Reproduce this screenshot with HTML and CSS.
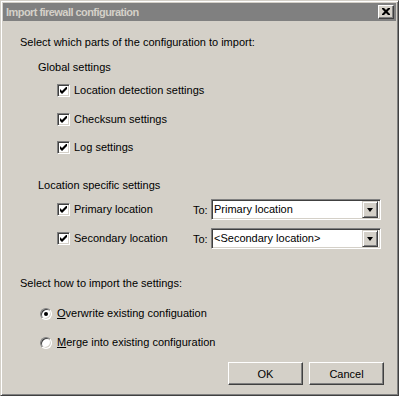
FILE: index.html
```html
<!DOCTYPE html>
<html lang="en">

<head>
    <meta charset="UTF-8">
    <meta name="viewport" content="width=device-width, initial-scale=1.0">
    <title>Import firewall configuration</title>
    <link rel="stylesheet" href="styles.css">
</head>

<body>
    <div class="window">
        <div class="titlebar">
            <span class="title">Import firewall configuration</span>
            <span class="close-btn">
                <svg width="8" height="7" viewBox="0 0 8 7">
                    <path d="M0 0h2l2 2 2-2h2v1L5.5 3.5 8 6v1H6L4 5 2 7H0V6l2.5-2.5L0 1z" fill="#000" />
                </svg>
            </span>
        </div>

        <div class="content">
            <div class="intro">Select which parts of the configuration to import:</div>

            <div class="group-label global-label">Global settings</div>
            <div class="check-list">
                <div class="check-row"><span class="checkbox checked"></span>Location detection settings</div>
                <div class="check-row"><span class="checkbox checked"></span>Checksum settings</div>
                <div class="check-row"><span class="checkbox checked"></span>Log settings</div>
            </div>

            <div class="group-label location-label">Location specific settings</div>
            <div class="location-list">
                <div class="location-row">
                    <div class="check-row loc-check"><span class="checkbox checked"></span>Primary location</div>
                    <span class="to-label">To:</span>
                    <div class="combo">
                        <span class="combo-text">Primary location</span>
                        <span class="combo-btn"><span class="arrow"></span></span>
                    </div>
                </div>
                <div class="location-row">
                    <div class="check-row loc-check"><span class="checkbox checked"></span>Secondary location</div>
                    <span class="to-label">To:</span>
                    <div class="combo">
                        <span class="combo-text">&lt;Secondary location&gt;</span>
                        <span class="combo-btn"><span class="arrow"></span></span>
                    </div>
                </div>
            </div>

            <div class="intro how-label">Select how to import the settings:</div>
            <div class="radio-list">
                <div class="radio-row"><span class="radio selected"></span><span><u>O</u>verwrite existing configuation</span></div>
                <div class="radio-row"><span class="radio"></span><span><u>M</u>erge into existing configuration</span></div>
            </div>

            <div class="buttons">
                <span class="btn">OK</span>
                <span class="btn">Cancel</span>
            </div>
        </div>
    </div>
</body>

</html>
```

FILE: styles.css
```css
body {
    margin: 0;
    font-family: "Liberation Sans", Arial, sans-serif;
    font-size: 11px;
    color: #000;
    background: #d4d0c8;
}

.window {
    width: 399px;
    height: 396px;
    box-sizing: border-box;
    padding: 2px;
    background: #d4d0c8;
    border: 1px solid;
    border-color: #d4d0c8 #404040 #404040 #d4d0c8;
    box-shadow: inset 1px 1px 0 #fff, inset -1px -1px 0 #808080;
    display: flex;
    flex-direction: column;
}

.titlebar {
    height: 18px;
    background: #808080;
    display: flex;
    align-items: center;
    justify-content: space-between;
    padding: 0 2px 0 3px;
}

.title {
    color: #d4d0c8;
    font-weight: bold;
    font-size: 11px;
    letter-spacing: -0.55px;
}

.close-btn {
    width: 16px;
    height: 14px;
    box-sizing: border-box;
    background: #d4d0c8;
    border: 1px solid;
    border-color: #fff #404040 #404040 #fff;
    box-shadow: inset -1px -1px 0 #808080;
    display: flex;
    align-items: center;
    justify-content: center;
    padding-bottom: 1px;
}

.content {
    display: flex;
    flex-direction: column;
    padding: 15px 0 0 17px;
}

.intro,
.group-label,
.check-row,
.radio-row {
    line-height: 13px;
    height: 13px;
    white-space: nowrap;
}

.global-label {
    margin: 12px 0 0 18px;
}

.check-list {
    display: flex;
    flex-direction: column;
    gap: 15.5px;
    margin: 10px 0 0 37px;
}

.check-row {
    display: flex;
    align-items: center;
    gap: 4px;
}

.checkbox {
    width: 13px;
    height: 13px;
    box-sizing: border-box;
    flex: none;
    background: #fff;
    border: 1px solid;
    border-color: #808080 #fff #fff #808080;
    box-shadow: inset 1px 1px 0 #404040, inset -1px -1px 0 #d4d0c8;
}

.checkbox.checked {
    background: #fff url("data:image/svg+xml,%3Csvg xmlns='http://www.w3.org/2000/svg' width='7' height='7'%3E%3Cpath d='M0 2l2 2 5-5v3L2 7 0 5z' fill='%23000'/%3E%3C/svg%3E") no-repeat 2px 2px;
}

.location-label {
    margin: 25px 0 0 18px;
}

.location-list {
    display: flex;
    flex-direction: column;
    gap: 8px;
    margin: 7px 0 0 37px;
}

.location-row {
    display: flex;
    align-items: center;
    height: 21px;
}

.loc-check {
    width: 136px;
}

.to-label {
    width: 18px;
}

.combo {
    width: 170px;
    height: 21px;
    box-sizing: border-box;
    background: #fff;
    border: 1px solid;
    border-color: #808080 #fff #fff #808080;
    box-shadow: inset 1px 1px 0 #404040, inset -1px -1px 0 #d4d0c8;
    display: flex;
    align-items: center;
    justify-content: space-between;
    padding: 1px 2px 2px 2px;
}

.combo-text {
    line-height: 13px;
}

.combo-btn {
    width: 16px;
    height: 17px;
    box-sizing: border-box;
    background: #d4d0c8;
    border: 1px solid;
    border-color: #d4d0c8 #404040 #404040 #d4d0c8;
    box-shadow: inset 1px 1px 0 #fff, inset -1px -1px 0 #808080;
    display: flex;
    align-items: center;
    justify-content: center;
    margin-top: 1px;
}

.arrow {
    width: 0;
    height: 0;
    border-left: 3.5px solid transparent;
    border-right: 3.5px solid transparent;
    border-top: 4px solid #000;
}

.how-label {
    margin-top: 28px;
    margin-left: 0;
}

.radio-list {
    display: flex;
    flex-direction: column;
    gap: 16px;
    margin: 17px 0 0 20px;
}

.radio-row {
    display: flex;
    align-items: center;
    gap: 5px;
}

.radio {
    width: 12px;
    height: 12px;
    box-sizing: border-box;
    flex: none;
    border-radius: 50%;
    background: #fff;
    border: 1px solid;
    border-color: #808080 #fff #fff #808080;
    box-shadow: inset 1px 1px 0 #404040, inset -1px -1px 0 #d4d0c8;
    display: flex;
    align-items: center;
    justify-content: center;
}

.radio.selected::after {
    content: "";
    width: 4px;
    height: 4px;
    border-radius: 50%;
    background: #000;
}

.buttons {
    display: flex;
    justify-content: flex-end;
    gap: 6px;
    margin: 13px 12px 0 0;
}

.btn {
    width: 75px;
    height: 23px;
    box-sizing: border-box;
    background: #d4d0c8;
    border: 1px solid;
    border-color: #fff #404040 #404040 #fff;
    box-shadow: inset -1px -1px 0 #808080;
    display: flex;
    align-items: center;
    justify-content: center;
}
```
